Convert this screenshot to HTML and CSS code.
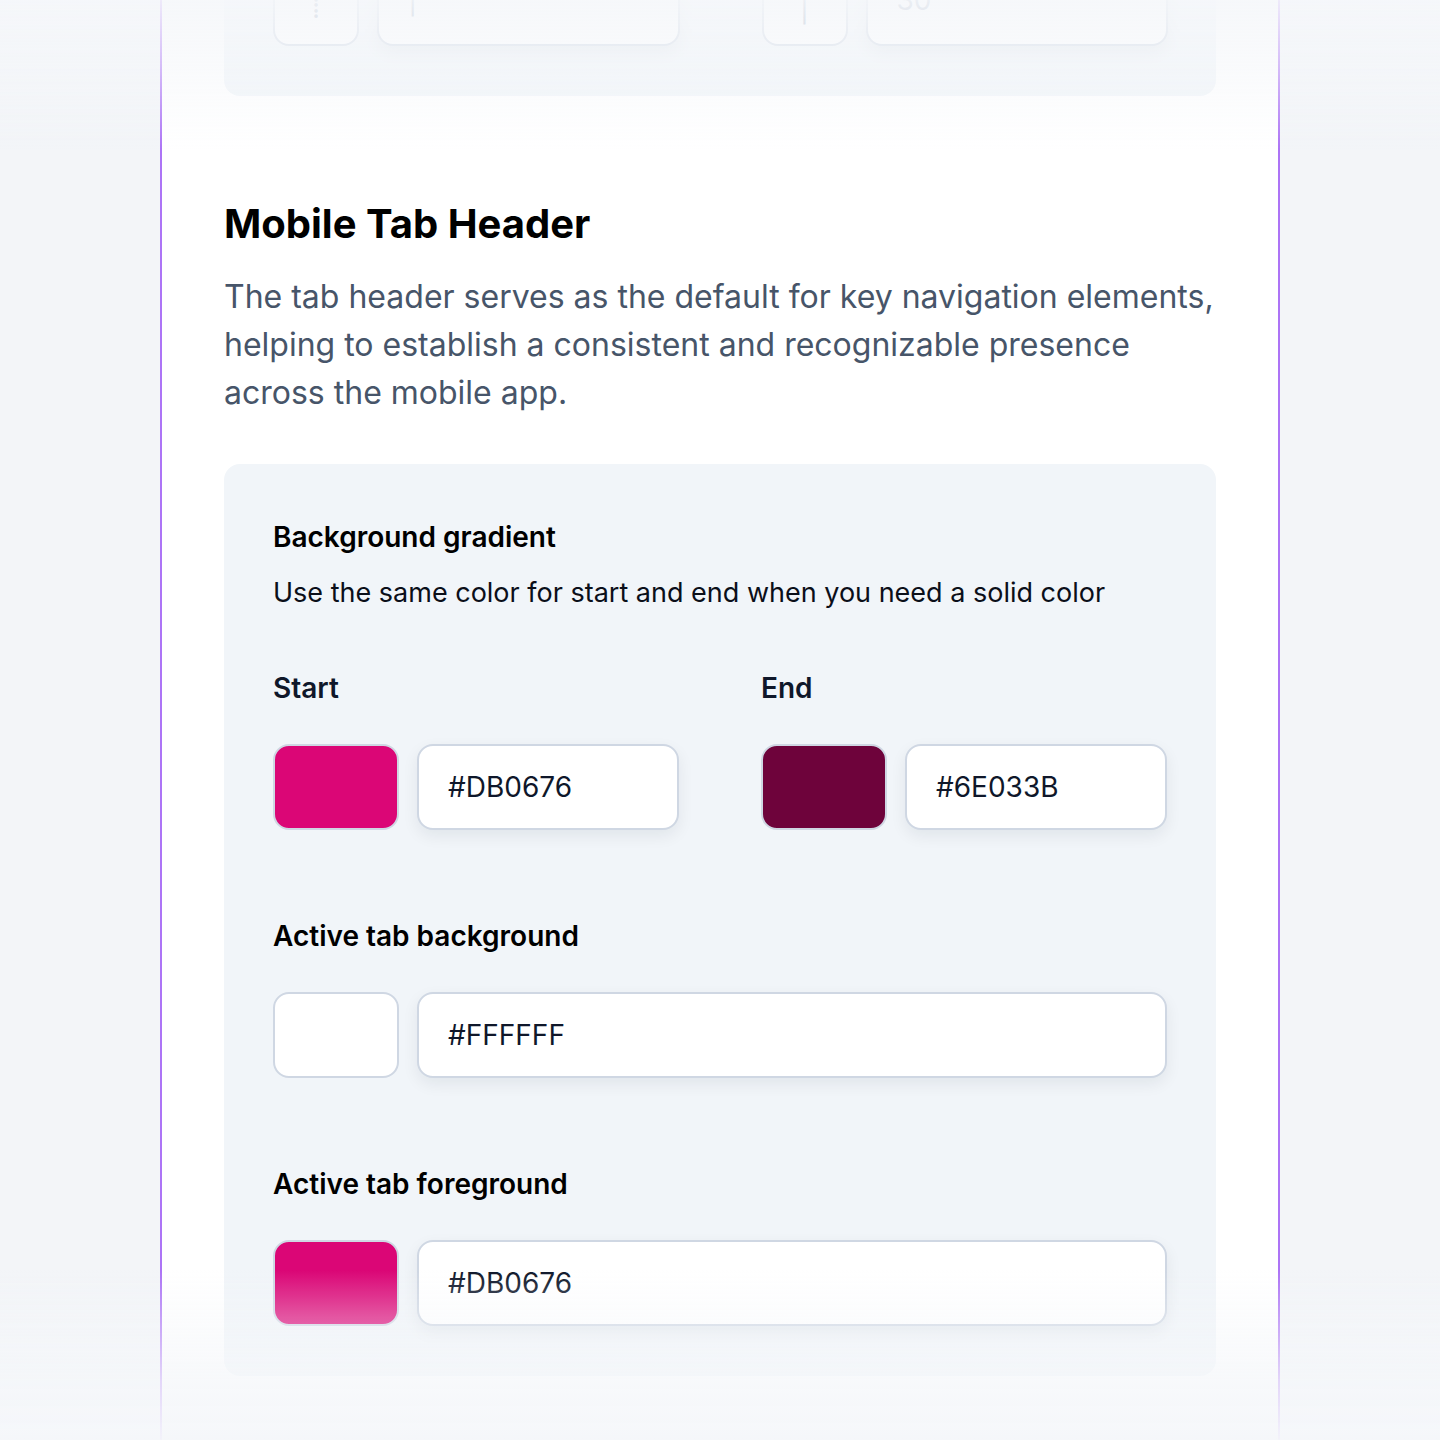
FILE: index.html
```html
<!DOCTYPE html>
<html lang="en">
<head>
<meta charset="utf-8">
<title>Mobile Tab Header</title>
<link rel="stylesheet" href="styles.css">
</head>
<body>
<div class="page">
  <main class="column">
    <section class="card card-prev">
      <div class="grid2">
        <div class="field-row">
          <div class="swatch swatch-small"><span class="ghost">⁞</span></div>
          <div class="hex-input"><span class="ghost">|</span></div>
        </div>
        <div class="field-row">
          <div class="swatch swatch-small"><span class="ghost">|</span></div>
          <div class="hex-input"><span class="ghost">30</span></div>
        </div>
      </div>
    </section>

    <section class="intro">
      <h2 class="title">Mobile Tab Header</h2>
      <p class="lead">The tab header serves as the default for key navigation elements, helping to establish a consistent and recognizable presence across the mobile app.</p>
    </section>

    <section class="card card-main">
      <h3 class="label">Background gradient</h3>
      <p class="hint">Use the same color for start and end when you need a solid color</p>

      <div class="grid2 gradient-grid">
        <div class="group">
          <div class="label label-sub">Start</div>
          <div class="field-row">
            <div class="swatch swatch-start"></div>
            <div class="hex-input">#DB0676</div>
          </div>
        </div>
        <div class="group">
          <div class="label label-sub">End</div>
          <div class="field-row">
            <div class="swatch swatch-end"></div>
            <div class="hex-input">#6E033B</div>
          </div>
        </div>
      </div>

      <div class="group group-full">
        <div class="label">Active tab background</div>
        <div class="field-row">
          <div class="swatch swatch-white"></div>
          <div class="hex-input">#FFFFFF</div>
        </div>
      </div>

      <div class="group group-full">
        <div class="label">Active tab foreground</div>
        <div class="field-row">
          <div class="swatch swatch-start"></div>
          <div class="hex-input">#DB0676</div>
        </div>
      </div>
    </section>
  </main>
</div>
<div class="fade-top"></div>
<div class="fade-bottom"></div>
</body>
</html>
```

FILE: styles.css
```css
* { box-sizing: border-box; }

html, body {
  margin: 0;
  padding: 0;
}

body {
  background: #f3f5f8;
  font-family: Inter, "Noto Sans", "Liberation Sans", sans-serif;
  height: 1440px;
  overflow: hidden;
}

.page {
  display: flex;
  justify-content: center;
}

.column {
  width: 1120px;
  min-height: 1440px;
  background: #ffffff;
  border-left: 2px solid #ad74f6;
  border-right: 2px solid #ad74f6;
  padding: 0 62px;
}

.card {
  background: #f1f5f9;
  border-radius: 16px;
}

.card-prev {
  margin-top: -88px;
  padding: 48px 48px 50px 49px;
}

.card-prev .swatch-small {
  width: 86px;
  flex: 0 0 86px;
  background: #ffffff;
  align-items: flex-end;
  padding-bottom: 22px;
}

.card-prev .hex-input {
  align-items: flex-end;
  padding-bottom: 30px;
}

.ghost {
  color: #94a3b8;
  font-size: 28px;
  line-height: 28px;
}

.grid2 {
  display: grid;
  grid-template-columns: 1fr 1fr;
  column-gap: 82px;
}

.field-row {
  display: flex;
  gap: 18px;
  height: 86px;
}

.swatch {
  flex: 0 0 126px;
  width: 126px;
  height: 86px;
  border: 2px solid #cfd7e3;
  border-radius: 16px;
  display: flex;
  align-items: center;
  justify-content: center;
}

.swatch-start { background: #db0676; }
.swatch-end { background: #6e033b; }
.swatch-white { background: #ffffff; }

.hex-input {
  flex: 1;
  height: 86px;
  background: #ffffff;
  border: 2px solid #cfd7e3;
  border-radius: 16px;
  box-shadow: 0 6px 16px rgba(15, 23, 42, 0.07);
  display: flex;
  align-items: center;
  padding-left: 29px;
  font-size: 28px;
  color: #0f172a;
}

.intro {
  padding-top: 104px;
}

.title {
  margin: 0;
  font-size: 40px;
  line-height: 48px;
  font-weight: 700;
  color: #000000;
}

.lead {
  margin: 25px 0 0;
  font-size: 32px;
  line-height: 48px;
  color: #475569;
}

.card-main {
  margin-top: 47px;
  padding: 53px 49px 50px;
}

.label {
  margin: 0;
  font-size: 28px;
  line-height: 40px;
  font-weight: 600;
  color: #000000;
}

.label-sub {
  color: #0f172a;
}

.hint {
  margin: 16px 0 0;
  font-size: 27px;
  line-height: 40px;
  color: #0b0f19;
}

.gradient-grid {
  margin-top: 55px;
}

.group .label {
  margin-bottom: 36px;
}

.group-full {
  margin-top: 86px;
}

.fade-top {
  position: fixed;
  left: 0;
  right: 0;
  top: 0;
  height: 150px;
  background: linear-gradient(to bottom, rgba(245, 247, 250, 0.9) 0%, rgba(245, 247, 250, 0.55) 45%, rgba(245, 247, 250, 0) 100%);
  pointer-events: none;
}

.fade-bottom {
  position: fixed;
  left: 0;
  right: 0;
  bottom: 0;
  height: 170px;
  background: linear-gradient(to bottom, rgba(245, 247, 250, 0) 0%, rgba(245, 247, 250, 0.3) 25%, rgba(245, 247, 250, 0.75) 65%, rgba(245, 247, 250, 0.97) 100%);
  pointer-events: none;
}
```
